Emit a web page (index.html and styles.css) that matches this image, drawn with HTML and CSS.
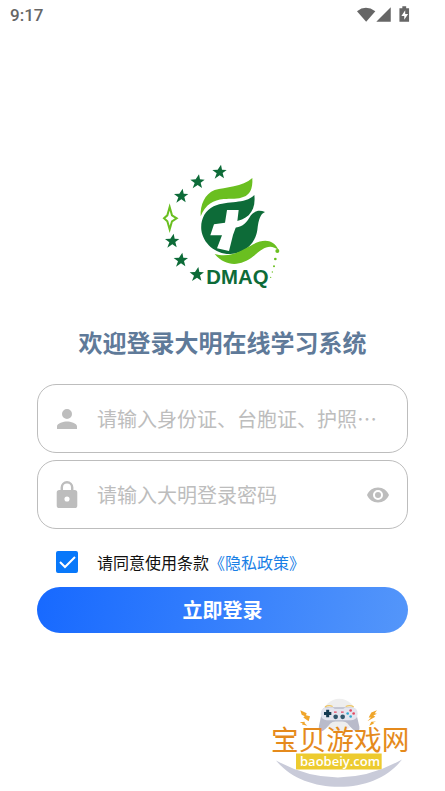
FILE: index.html
```html
<!DOCTYPE html>
<html lang="zh-CN">
<head>
<meta charset="utf-8">
<meta name="viewport" content="width=device-width, initial-scale=1">
<title>登录</title>
<link rel="stylesheet" href="styles.css">
</head>
<body>
<header class="status">
  <span class="time">9:17</span>
  <svg class="status-icons" viewBox="0 0 56 18" aria-hidden="true">
    <path d="M0 5Q9-2 19 5L9.500 16Z"/>
    <path d="M35 1V16H20Z"/>
    <path d="M44 2h3V0h4v2h3v14H44Z"/>
    <path class="bolt" d="M50 4l-4 6h3v4l4-6h-3Z"/>
  </svg>
</header>
<main class="page">
  <svg class="logo" viewBox="8 0 420 420" role="img" aria-label="DMAQ">
    <defs>
      <path id="star" d="M5-22L8-7L22-6L10 3L14 19L1 10L-14 20L-8 4L-21-6L-5-7Z"/>
    </defs>
    <g class="dark">
      <use href="#star" x="207" y="51"/>
      <use href="#star" x="141" y="80"/>
      <use href="#star" x="92" y="123"/>
      <use href="#star" x="65" y="258"/>
      <use href="#star" x="91" y="315"/>
      <use href="#star" x="139" y="358"/>
      <path d="M312 120C282 150 235 134 190 154C163 167 150 195 153 225C158 265 195 298 240 297C285 295 315 265 321 225C325 192 330 177 344 171C325 163 308 168 297 188C286 208 270 217 250 218L250 200C290 196 318 170 312 120Z"/>
    </g>
    <g class="lime">
      <path d="M306 69C277 96 225 96 193 105C163 117 149 150 151 184C165 148 190 135 220 132C263 130 310 138 306 69Z"/>
      <path d="M193 297C234 309 266 291 301 272C333 253 367 247 386 287C357 262 336 282 309 304C273 333 228 338 193 297Z"/>
      <circle cx="381" cy="288" r="6"/>
      <circle cx="375" cy="312" r="4"/>
      <circle cx="371" cy="334" r="3"/>
      <circle cx="366" cy="351" r="2"/>
      <circle cx="361" cy="367" r="2"/>
    </g>
    <path class="spark" d="M58 156L65 181L79 190L65 199L58 223L51 199L41 190L51 181Z"/>
    <path class="white" d="M230 165H265L261 199L256 218L248 240L236 288L200 280L215 241L180 241L191 208L224 203Z"/>
    <text class="logo-text" x="168" y="388">DMAQ</text>
  </svg>
  <h1 class="title">欢迎登录大明在线学习系统</h1>
  <form class="form">
    <div class="field">
      <label class="lead" for="account" aria-label="账号">
        <svg class="icon" viewBox="4 4 16 16" aria-hidden="true"><path d="M12 12a4 4 0 1 0 0-8 4 4 0 0 0 0 8Zm0 2c-2.670 0-8 1.340-8 4v2h16v-2c0-2.660-5.330-4-8-4Z"/></svg>
      </label>
      <input id="account" class="input" type="text" placeholder="请输入身份证、台胞证、护照…">
    </div>
    <div class="field">
      <label class="lead" for="password" aria-label="密码">
        <svg class="icon lock" viewBox="4 1 16 21" aria-hidden="true"><path d="M18 8h-1V6A5 5 0 0 0 7 6v2H6a2 2 0 0 0-2 2v10a2 2 0 0 0 2 2h12a2 2 0 0 0 2-2V10a2 2 0 0 0-2-2Zm-6 9a2 2 0 1 1 0-4 2 2 0 0 1 0 4ZM8.900 8V6a3.100 3.100 0 0 1 6.200 0v2Z"/></svg>
      </label>
      <input id="password" class="input" type="password" placeholder="请输入大明登录密码">
      <button class="eye" type="button" aria-label="显示密码">
        <svg viewBox="1 4.500 22 15" aria-hidden="true"><path d="M12 4.500C7 4.500 2.730 7.610 1 12c1.730 4.390 6 7.500 11 7.500s9.270-3.110 11-7.500c-1.730-4.390-6-7.500-11-7.500ZM12 17a5 5 0 1 1 0-10 5 5 0 0 1 0 10Zm0-8a3 3 0 1 0 0 6 3 3 0 0 0 0-6Z"/></svg>
      </button>
    </div>
    <div class="terms">
      <span class="tick">
        <input id="agree" class="check" type="checkbox" checked>
        <svg class="mark" viewBox="0 0 22 22" aria-hidden="true"><path d="M4 11l5 5L19 6"/></svg>
      </span>
      <p class="terms-text"><label for="agree">请同意使用条款</label><a class="link" href="#">《隐私政策》</a></p>
    </div>
    <button class="submit" type="submit">立即登录</button>
  </form>
</main>
<footer class="footer">
  <svg class="brand" viewBox="0 0 495 300" role="img" aria-label="宝贝游戏网 baobeiy.com">
    <circle class="halo" cx="238" cy="74" r="49"/>
    <path class="pad" d="M190 54Q195 49 208 50H266Q282 49 286 56L298 108Q300 123 289 122Q280 121 262 98Q257 93 248 93H226Q217 93 211 99Q193 122 184 122Q174 122 177 106L186 64Z"/>
    <path class="face" d="M194 51H218L224 55H250L256 51H280Q293 54 293 70Q292 89 273 89H200Q182 87 182 70Q183 55 194 51Z"/>
    <path class="trim" d="M195 49Q206 42 218 48M257 48Q270 42 281 49"/>
    <path class="cross" d="M203 58V80M192 69H214"/>
    <circle class="stick" cx="227" cy="79" r="7"/>
    <circle class="stick" cx="248" cy="79" r="7"/>
    <circle class="red" cx="272" cy="60" r="4"/>
    <circle class="cyan" cx="263" cy="69" r="4"/>
    <circle class="red" cx="281" cy="69" r="4"/>
    <circle class="cyan" cx="272" cy="78" r="4"/>
    <path class="red" d="M222 63h8v4h-8ZM243 63h8v4h-8Z"/>
    <path class="flash" d="M121 59L140 68L138 74L150 77L146 92L130 81L134 77L125 73ZM119 95L134 94L134 98L142 106L126 102L128 99ZM351 59L334 66L326 81L333 81L322 92L346 79L340 75L351 70L344 68ZM348 93L334 94L328 106L342 99L339 97Z"/>
    <text class="brand-name" x="33" y="178">宝贝游戏网</text>
    <path class="plate" d="M108 189H365V237H108Z"/>
    <text class="brand-url" x="120" y="227">baobeiy.com</text>
    <path class="smile" d="M48 210Q236 313 426 207C385 260 317 289 238 289C161 289 92 263 48 210Z"/>
  </svg>
</footer>
</body>
</html>
```
FILE: styles.css
```css
* {
  box-sizing: border-box;
}

body {
  margin: 0;
  min-height: 100vh;
  display: flex;
  flex-direction: column;
  background: #fff;
  font-family: "Noto Sans CJK SC", "Noto Sans", sans-serif;
}

.status {
  display: flex;
  align-items: center;
  justify-content: space-between;
  height: 30px;
  padding: 0 34px 0 10px;
  color: #666;
  font: 500 17px/20px Roboto, sans-serif;
}

.status-icons {
  width: 54px;
  height: 18px;
  fill: #666;
}

.status-icons .bolt {
  fill: #fff;
}

.page {
  display: flex;
  flex-direction: column;
  align-items: center;
  padding: 125px 37px 0;
}

.logo {
  width: 140px;
  height: 140px;
}

.dark,
.logo-text {
  fill: #0d6b38;
}

.lime {
  fill: #6abf20;
}

.white {
  fill: #fff;
}

.spark {
  fill: none;
  stroke: #6abf20;
  stroke-width: 6;
}

.logo-text {
  font: bold 61px "Liberation Sans", sans-serif;
}

.title {
  margin: 29px 0 0;
  color: #5f7a99;
  font-size: 24px;
  font-weight: 700;
  line-height: 36px;
  white-space: nowrap;
}

.form {
  display: flex;
  flex-direction: column;
  width: 100%;
  margin-top: 24px;
}

.field {
  display: flex;
  align-items: center;
  height: 69px;
  margin-bottom: 7px;
  padding: 0 18px;
  border: 1px solid #bdbdbd;
  border-radius: 19px;
}

.lead {
  display: flex;
  flex: none;
  width: 41px;
}

.icon {
  width: 22px;
  height: 20px;
  fill: #bdbdbd;
}

.lock {
  height: 27px;
}

.input {
  flex: 1;
  min-width: 0;
  height: 40px;
  padding: 0;
  border: 0;
  outline: 0;
  background: none;
  color: #333;
  font: 20px/30px "Noto Sans CJK SC", sans-serif;
}

.input::placeholder {
  color: #bdbdbd;
  opacity: 1;
}

.eye {
  display: flex;
  flex: none;
  padding: 0;
  border: 0;
  background: none;
}

.eye svg {
  width: 22px;
  height: 16px;
  fill: #bdbdbd;
}

.terms {
  display: flex;
  align-items: center;
  height: 51px;
  padding-left: 19px;
}

.tick {
  position: relative;
  width: 22px;
  height: 22px;
  margin-right: 19px;
}

.check {
  display: block;
  width: 22px;
  height: 22px;
  margin: 0;
  appearance: none;
  border: 2px solid #bdbdbd;
  border-radius: 2px;
}

.check:checked {
  border-color: #0878fa;
  background: #0878fa;
}

.mark {
  position: absolute;
  inset: 0;
  fill: none;
  stroke: #fff;
  stroke-width: 2;
  pointer-events: none;
}

.terms-text {
  margin: 0;
  color: #111;
  font-size: 16px;
  line-height: 24px;
  white-space: nowrap;
}

.link {
  color: #1980e6;
  text-decoration: none;
}

.submit {
  height: 46px;
  padding: 0;
  border: 0;
  border-radius: 23px;
  background: linear-gradient(100deg, #1769ff, #5496fa);
  color: #fff;
  font: 700 20px/30px "Noto Sans CJK SC", sans-serif;
}

.footer {
  display: flex;
  justify-content: flex-end;
  margin-top: auto;
  padding-right: 20px;
}

.brand {
  width: 165px;
  height: 101px;
}

.halo {
  fill: #eee;
}

.pad {
  fill: #b9bbca;
}

.face {
  fill: #e4e5ee;
}

.trim {
  fill: none;
  stroke: #edc565;
  stroke-width: 4;
}

.cross {
  stroke: #163b50;
  stroke-width: 9;
}

.stick {
  fill: #31566b;
}

.red {
  fill: #e34961;
}

.cyan {
  fill: #32a9cf;
}

.flash {
  fill: #f0a62b;
}

.brand-name {
  fill: #e58a1c;
  font: 400 83px "Noto Sans CJK SC", sans-serif;
}

.plate {
  fill: #edcb2f;
}

.brand-url {
  fill: #fff;
  font: 600 39px "Open Sans", sans-serif;
}

.smile {
  fill: #c9cbd9;
}
```
